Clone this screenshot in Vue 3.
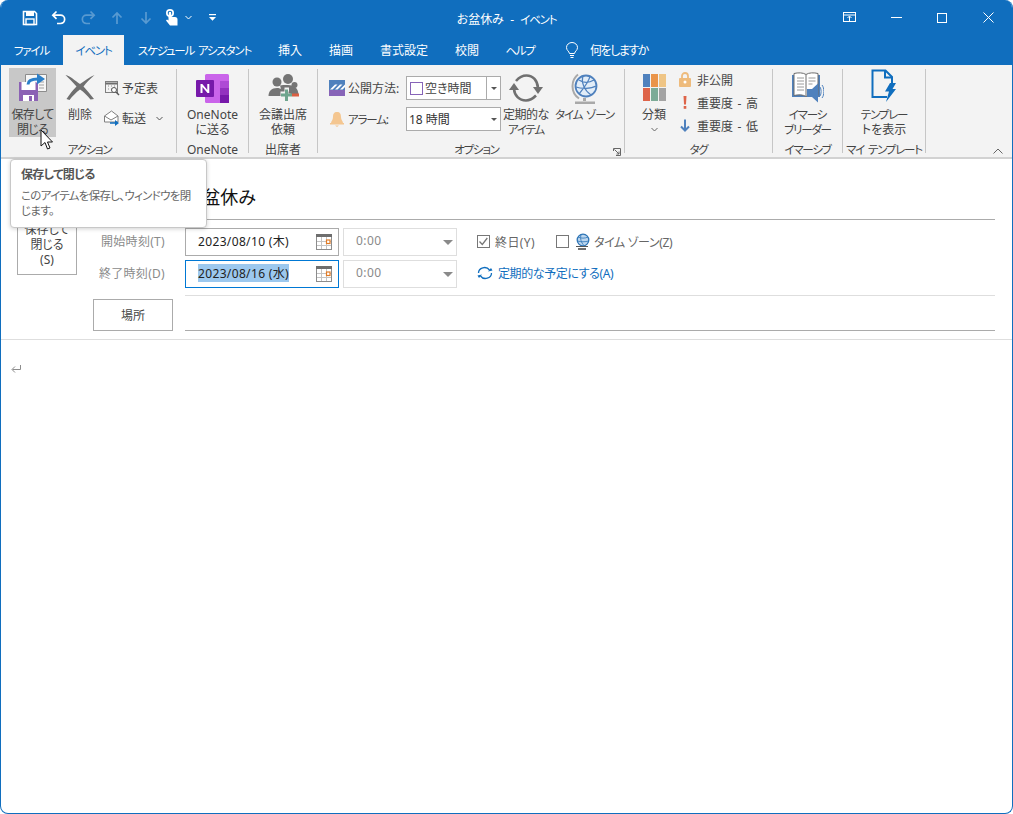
<script setup>
const tabs = [
  { label: 'ファイル', w: 63, kana: true },
  { label: 'イベント', w: 61, active: true, kana: true },
  { label: 'スケジュール アシスタント', w: 141, kana: true },
  { label: '挿入', w: 50 },
  { label: '描画', w: 52 },
  { label: '書式設定', w: 74 },
  { label: '校閲', w: 52 },
  { label: 'ヘルプ', w: 54, kana: true }
]
</script>

<template>
  <div class="window">
    <header class="titlebar">
      <div class="qat">
        <span class="qbtn">
          <svg width="16" height="16" viewBox="0 0 16 16"><path d="M1.500 1.500h11l2 2v11h-13z" fill="none" stroke="#fff" stroke-width="1.600"/><rect x="4" y="1.500" width="8" height="4.500" fill="#fff"/><rect x="4" y="9" width="8" height="5.500" fill="none" stroke="#fff" stroke-width="1.400"/></svg>
        </span>
        <span class="qbtn">
          <svg width="16" height="16" viewBox="0 0 16 16" fill="none" stroke="#fff" stroke-width="1.700"><path d="M5.500 1.500 1.800 5.200l3.700 3.700"/><path d="M2 5.200h7.500a4 4 0 0 1 0 8.300H6"/></svg>
        </span>
        <span class="qbtn dim">
          <svg width="16" height="16" viewBox="0 0 16 16" fill="none" stroke="#fff" stroke-width="1.700"><path d="m10.500 1.500 3.700 3.700-3.700 3.700"/><path d="M14 5.200H6.500a4 4 0 0 0 0 8.300H10"/></svg>
        </span>
        <span class="qbtn dim">
          <svg width="12" height="14" viewBox="0 0 12 14" fill="none" stroke="#fff" stroke-width="1.700"><path d="M6 13V2M1.500 6.500 6 2l4.500 4.500"/></svg>
        </span>
        <span class="qbtn dim">
          <svg width="12" height="14" viewBox="0 0 12 14" fill="none" stroke="#fff" stroke-width="1.700"><path d="M6 1v11M1.500 7.500 6 12l4.500-4.500"/></svg>
        </span>
        <span class="qbtn touch">
          <svg width="13" height="17" viewBox="0 0 13 17" fill="#fff"><circle cx="5" cy="4" r="4"/><path d="M3.500 4a1.500 1.500 0 0 1 3 0v4h3.500a2.500 2.500 0 0 1 2.500 2.500V16.500H5L1 11.500l1-1 1.500 1z"/><circle cx="5" cy="4" r="2.300" fill="#106ebe"/><path d="M3.800 4a1.200 1.200 0 0 1 2.400 0v5H3.800z"/></svg>
        </span>
        <span class="qbtn chev">
          <svg width="7" height="5" viewBox="0 0 7 5" fill="none" stroke="#fff"><path d="m.5 1 3 3 3-3"/></svg>
        </span>
        <span class="qbtn custom">
          <svg width="7" height="7" viewBox="0 0 7 7" fill="#fff"><rect width="7" height="1.200"/><path d="M0 3h7L3.500 6.800z"/></svg>
        </span>
      </div>
      <div class="doc-title">お盆休み&nbsp; -&nbsp; <span class="kana">イベント</span></div>
      <div class="controls">
        <span class="ctl">
          <svg width="14" height="11" viewBox="0 0 14 11" fill="none" stroke="#fff"><rect x=".5" y=".5" width="12" height="9"/><path d="M.5 3h12M6.500 9.500V4.500"/><path d="M4.500 6 6.500 4l2 2"/></svg>
        </span>
        <span class="ctl"><svg width="11" height="2" viewBox="0 0 11 2"><rect width="11" height="1" fill="#fff"/></svg></span>
        <span class="ctl"><svg width="10" height="10" viewBox="0 0 10 10"><rect x=".5" y=".5" width="9" height="9" fill="none" stroke="#fff"/></svg></span>
        <span class="ctl"><svg width="11" height="11" viewBox="0 0 11 11" fill="none" stroke="#fff"><path d="m.5.500 10 10M10.500.500l-10 10"/></svg></span>
      </div>
    </header>

    <nav class="tabs">
      <span v-for="t in tabs" :key="t.label" class="tab" :class="{ active: t.active }" :style="{ width: t.w + 'px' }"><span :class="{ kana: t.kana }">{{ t.label }}</span></span>
      <span class="tell">
        <svg width="14" height="17" viewBox="0 0 14 17" fill="none" stroke="#fff"><path d="M4.500 11.500C4 9 1.500 8.500 1.500 5.500a5.500 5 0 0 1 11 0c0 3-2.500 3.500-3 6z"/><path d="M5 13.500h4M5.500 15.500h3"/></svg>
        <span class="tell-text">何をしますか</span>
      </span>
    </nav>

    <section class="ribbon">
      <div class="group g1">
        <div class="body">
          <div class="big save">
            <span class="ico">
              <svg width="30" height="28" viewBox="0 0 30 28">
                <path d="M7.500 1.500H28.500V18.500H7.500z" fill="#f6f6f6" stroke="#8c8c8c"/>
                <path d="M21 6h5M21 9h5M21 12h5M21 15h5" stroke="#a0a0a0"/>
                <path d="M1 9h17l2 2v17H1z" fill="#8b62b4"/>
                <rect x="3.500" y="9" width="14" height="8" fill="#fff"/>
                <rect x="5" y="22" width="11" height="6" fill="#fff"/>
                <rect x="11" y="23" width="3" height="5" fill="#8b62b4"/>
                <path d="M10 11.500C10 8 13 6 20 6" fill="none" stroke="#2a7fc9" stroke-width="3"/>
                <path d="M19 0.500 27 6 19 11.500z" fill="#2a7fc9"/>
              </svg>
            </span>
            <span class="cap">保存して<br>閉じる</span>
          </div>
          <div class="big del">
            <span class="ico">
              <svg width="30" height="26" viewBox="0 0 30 26" fill="#6f6f6f"><path d="M.5 1C5 2 10 6.500 15 10 20 6.500 24.500 3 29.500 1 25 5 21.500 8.500 18.500 12.500c3.500 4 7 8 10.500 12.500L25.500 25.500C22 21.500 19 18 15 15.500 11 18.500 7.500 22 4.500 26l-3-1c3-4.500 6-8.500 10-12.500C8 8.500 4 4.500.5 1z"/></svg>
            </span>
            <span class="cap">削除</span>
          </div>
          <div class="smalls">
            <div class="small">
              <svg width="16" height="16" viewBox="0 0 16 16" fill="none"><rect x="1.500" y="1.500" width="12" height="11" stroke="#7f7f7f"/><path d="M1.500 3.500h12" stroke="#6d6d6d" stroke-width="2"/><path d="M4 6h1M7 6h1M10 6h1M4 9h1M7 9h1" stroke="#8f8f8f"/><circle cx="10" cy="10" r="2.500" fill="#fff" stroke="#555"/><path d="m12 12 3 3" stroke="#555" stroke-width="1.400"/></svg>
              <span>予定表</span>
            </div>
            <div class="small fwd">
              <svg width="16" height="16" viewBox="0 0 16 16" fill="none"><path d="M.5 6 7.500 1 14 6v6H.5z" stroke="#7f7f7f" fill="#fff"/><path d="M.5 6 7 10l7-4" stroke="#7f7f7f"/><path d="M6 13h7" stroke="#106ebe" stroke-width="1.600"/><path d="M11 10l4 3-4 3z" fill="#106ebe"/></svg>
              <span>転送</span>
              <svg class="mini" width="7" height="5" viewBox="0 0 7 5" fill="none" stroke="#555"><path d="m.5 1 3 3 3-3"/></svg>
            </div>
          </div>
        </div>
        <div class="label"><span class="kana">アクション</span></div>
      </div>

      <div class="group g2">
        <div class="body center">
          <div class="big wide">
            <span class="ico">
              <svg width="33" height="29" viewBox="0 0 33 29">
                <rect x="9" y="0" width="24" height="29" rx="1.500" fill="#ca64ea"/>
                <rect x="24" y="7" width="9" height="7" fill="#ae4bd5"/>
                <rect x="24" y="14" width="9" height="7" fill="#9332bf"/>
                <rect x="24" y="21" width="9" height="8" fill="#7719aa"/>
                <rect x="0" y="6" width="18" height="17" rx="1" fill="#7719aa"/>
                <path d="M4.500 19V10h1.800l5 6v-6h2v9h-1.800l-5-6v6z" fill="#fff"/>
              </svg>
            </span>
            <span class="cap">OneNote<br>に送る</span>
          </div>
        </div>
        <div class="label">OneNote</div>
      </div>

      <div class="group g3">
        <div class="body center">
          <div class="big wide">
            <span class="ico">
              <svg width="31" height="29" viewBox="0 0 31 29" fill="#757575">
                <circle cx="9" cy="8" r="4.500"/><circle cx="20" cy="5" r="5"/><circle cx="26.500" cy="11" r="3"/>
                <path d="M.5 22c0-5 3-8 8.500-8 2 0 3.500.5 5 1.500l1 6.500z"/>
                <path d="M12 11.500c2-1 4-.5 8-.5 6 0 10 3 10.500 9H14.500z"/>
                <path d="M12.500 22.500v-5h4v-4h4.500v4h-.5v2h2v3h-2v4h-4v-4z" fill="#f3f3f3"/>
                <path d="M15.500 22.500h-4v-3h4v-4h3v4h4v3h-4v4.500h-3z" fill="#6fa58e" transform="translate(1.500 0)"/>
                <rect x="24" y="19.500" width="7" height="3" fill="#d95f43"/>
              </svg>
            </span>
            <span class="cap">会議出席<br>依頼</span>
          </div>
        </div>
        <div class="label">出席者</div>
      </div>

      <div class="group g4">
        <div class="body">
          <div class="opt-col">
            <div class="opt-row">
              <span class="opt-ico">
                <svg width="16" height="16" viewBox="0 0 16 16"><rect width="16" height="10" fill="#4f81bd"/><path d="M1 9.500 6 4.500h2.500l-5 5zM6 9.500l5-5h2.500l-5 5zM11 9.500l5-5v2.500l-2.500 2.500z" fill="#fff"/><rect width="16" height="6" y="10" fill="#8764b8"/></svg>
              </span>
              <span class="opt-label">公開方法:</span>
              <div class="combo">
                <i class="swatch"></i><span>空き時間</span>
                <span class="drop sep"><i class="tri"></i></span>
              </div>
            </div>
            <div class="opt-row">
              <span class="opt-ico">
                <svg width="16" height="16" viewBox="0 0 16 16" fill="#f4c690"><path d="M8 1c3 0 4 2 4 5 0 3 2 4 2 6H2c0-2 2-3 2-6 0-3 1-5 4-5z"/><rect x="1" y="12" width="14" height="1.500"/><path d="M6 14.500h4L8 16z"/></svg>
              </span>
              <span class="opt-label"><span class="kana">アラーム</span>:</span>
              <div class="combo alarm-combo">
                <span class="alarm">18 時間</span>
                <span class="drop"><i class="tri"></i></span>
              </div>
            </div>
          </div>
          <div class="big recur">
            <span class="ico">
              <svg width="32" height="30" viewBox="0 0 32 30" fill="none" stroke="#707070" stroke-width="2.600"><path d="M6 8C9 4.500 12.500 2.500 16.500 2.500 23 2.500 27.500 7.500 28 15"/><path d="M26 22.500C23 25.500 20 27.500 16 27.500 9 27.500 4.500 22.500 4 16"/><path d="M23 14h10l-5 7z" fill="#707070" stroke="none"/><path d="M-1 17H9L4 10z" fill="#707070" stroke="none"/></svg>
            </span>
            <span class="cap">定期的な<br><span class="kana">アイテム</span></span>
          </div>
          <div class="big tz">
            <span class="ico">
              <svg width="28" height="32" viewBox="0 0 28 32" fill="none">
                <path d="M7 1.500C0 7-1 19 8 25.500" stroke="#a9a9a9" stroke-width="2"/>
                <circle cx="15" cy="13" r="10.500" fill="#e2edf8" stroke="#4f81bd" stroke-width="1.800"/>
                <path d="M8 7c4 3 10 3 15 0M5 14c5 2 15 2 20-1M8 21c4-5 10-12 11-18M12 3c-2 6 1 14 8 19" stroke="#4f81bd" stroke-width="1.300"/>
                <rect x="12" y="25" width="3" height="3" fill="#a9a9a9"/>
                <rect x="4" y="28.500" width="20" height="2.500" fill="#a9a9a9"/>
              </svg>
            </span>
            <span class="cap nowrap kana">タイム ゾーン</span>
          </div>
        </div>
        <div class="label"><span class="kana">オプション</span></div>
        <svg class="launcher" width="8" height="8" viewBox="0 0 8 8" fill="none" stroke="#666"><path d="M.5 3V.5H7.500V7.500H3"/><path d="M1.500 1.500 6 6M6 3.500V6H3.500"/></svg>
      </div>

      <div class="group g5">
        <div class="body">
          <div class="big cat">
            <span class="ico">
              <span class="cat-grid">
                <i style="background:#4f81bd"></i><i style="background:#ea9449"></i><i style="background:#efc585"></i>
                <i style="background:#de6449"></i><i style="background:#7cab97"></i><i style="background:#a3a3a3"></i>
              </span>
            </span>
            <span class="cap">分類</span>
            <svg class="under" width="7" height="5" viewBox="0 0 7 5" fill="none" stroke="#666"><path d="m.5 1 3 3 3-3"/></svg>
          </div>
          <div class="tags">
            <div class="tag">
              <svg width="12" height="15" viewBox="0 0 12 15"><path d="M3 7V4a3 3 0 0 1 6 0v3" fill="none" stroke="#eebb7c" stroke-width="1.800"/><rect y="6" width="12" height="9" rx="1" fill="#eebb7c"/><circle cx="6" cy="10" r="1.500" fill="#fff"/></svg>
              <span>非公開</span>
            </div>
            <div class="tag">
              <svg width="12" height="15" viewBox="0 0 12 15" fill="#de6449"><path d="M4.500 1h3l-.5 8.500H5z"/><rect x="4.700" y="11" width="2.600" height="2.800"/></svg>
              <span>重要度 - 高</span>
            </div>
            <div class="tag">
              <svg width="12" height="15" viewBox="0 0 12 15" fill="none" stroke="#4f81bd" stroke-width="2"><path d="M6 1.500v11M2 8.500l4 4 4-4"/></svg>
              <span>重要度 - 低</span>
            </div>
          </div>
        </div>
        <div class="label"><span class="kana">タグ</span></div>
      </div>

      <div class="group g6">
        <div class="body center">
          <div class="big wide">
            <span class="ico">
              <svg width="33" height="31" viewBox="0 0 33 31" fill="none">
                <path d="M1 3h28v22H1z" fill="#4f81bd"/>
                <path d="M3 1.500c4-1 9-1 12 1 3-2 8-2 12-1v22c-4-1-9-1-12 1-3-2-8-2-12-1z" fill="#fff" stroke="#6d6d6d"/>
                <path d="M15 3v21" stroke="#6d6d6d"/>
                <path d="M6 6h7M6 9h7M6 12h7M6 15h7M6 18h7M17.500 6h7M17.500 9h7M17.500 12h4" stroke="#9a9a9a"/>
                <path d="M16 17h5l6-5.500v19L21 25h-5z" fill="#4f81bd"/>
                <path d="M29 15c1.500 2 1.500 7 0 9M31 13c2.500 3 2.500 10 0 13" stroke="#4f81bd"/>
              </svg>
            </span>
            <span class="cap kana">イマーシ<br>ブリーダー</span>
          </div>
        </div>
        <div class="label"><span class="kana">イマーシブ</span></div>
      </div>

      <div class="group g7">
        <div class="body center">
          <div class="big wide">
            <span class="ico tmpl">
              <svg width="26" height="34" viewBox="0 0 26 34" fill="none">
                <path d="M16 28H1.500V1.500h13L21 8v6" stroke="#106ebe" stroke-width="2"/>
                <path d="M14 1.500V8.500h7" stroke="#106ebe" stroke-width="2"/>
                <path d="M19 14h6l-3.500 6H25L15 33l3-10.500h-4z" fill="#106ebe"/>
              </svg>
            </span>
            <span class="cap"><span class="kana">テンプレー</span><br>トを表示</span>
          </div>
        </div>
        <div class="label nowrap"><span class="kana">マイ テンプレート</span></div>
      </div>
      <svg class="collapse" width="10" height="6" viewBox="0 0 10 6" fill="none" stroke="#666"><path d="m.5 5.500 4.500-4.500 4.500 4.500"/></svg>
    </section>

    <section class="form">
      <div class="top">
        <div class="send-col">
          <button class="send">保存して<br>閉じる<br>(S)</button>
        </div>
        <div class="fields">
          <div class="subject"><span>お盆休み</span></div>
          <div class="time-row">
            <span class="flabel">開始時刻(T)</span>
            <div class="date">
              <span>2023/08/10 (木)</span>
              <svg class="cal" width="16" height="16" viewBox="0 0 16 16"><rect x=".5" y=".5" width="15" height="15" fill="#fff" stroke="#8c8c8c"/><rect width="16" height="3" fill="#6e6e6e"/><path d="M5.500 3v12M10.500 3v12M1 7.500h14M1 11.500h14" stroke="#c4c4c4"/><rect x="10.500" y="6" width="3.500" height="3.500" fill="#fff" stroke="#e07b26" stroke-width="1.200"/></svg>
            </div>
            <div class="time"><span>0:00</span><i class="tri big-tri"></i></div>
            <label class="check first">
              <i class="box"><svg width="13" height="13" viewBox="0 0 13 13" fill="none" stroke="#777" stroke-width="1.300"><path d="m2.500 6.500 2.800 3 5-6.500"/></svg></i>
              <span>終日(Y)</span>
            </label>
            <label class="check second">
              <i class="box"></i>
              <svg class="globe" width="15" height="17" viewBox="0 0 15 17" fill="none"><circle cx="8" cy="7" r="5.800" fill="#bcd6ee" stroke="#2e75b6" stroke-width="1.300"/><path d="M3 4c3 1.500 7 1.500 10 0M2.500 8c3 1 8 1 11 0M6 1.500c-1 4 0 8 3 11" stroke="#2e75b6" stroke-width=".8"/><path d="M1 13.500h12" stroke="#555"/><path d="M3 16h8" stroke="#333" stroke-width="1.400"/></svg>
              <span class="tz-text">タイム ゾーン(Z)</span>
            </label>
          </div>
          <div class="time-row">
            <span class="flabel">終了時刻(D)</span>
            <div class="date focus">
              <span class="sel">2023/08/16 (水)</span>
              <svg class="cal" width="16" height="16" viewBox="0 0 16 16"><rect x=".5" y=".5" width="15" height="15" fill="#fff" stroke="#8c8c8c"/><rect width="16" height="3" fill="#6e6e6e"/><path d="M5.500 3v12M10.500 3v12M1 7.500h14M1 11.500h14" stroke="#c4c4c4"/><rect x="10.500" y="6" width="3.500" height="3.500" fill="#fff" stroke="#e07b26" stroke-width="1.200"/></svg>
            </div>
            <div class="time"><span>0:00</span><i class="tri big-tri"></i></div>
            <span class="recur-link">
              <svg width="16" height="14" viewBox="0 0 16 14" fill="none" stroke="#106ebe" stroke-width="1.300"><path d="M1.500 7a6 5.500 0 0 1 11-3"/><path d="M14.500 7a6 5.500 0 0 1-11 3"/><path d="M15.500 4.500 11 5.500l3-3.500z" fill="#106ebe" stroke="none"/><path d="M.5 9.500 5 8.500 2 12z" fill="#106ebe" stroke="none"/></svg>
              <span>定期的な予定にする(A)</span>
            </span>
          </div>
        </div>
      </div>
      <div class="divider"></div>
      <div class="location">
        <button class="place">場所</button>
        <div class="loc-input"></div>
      </div>
    </section>
    <div class="full-line"></div>
    <div class="note">
      <svg width="10" height="9" viewBox="0 0 10 9" fill="none" stroke="#8c8c8c"><path d="M9.500 0v4.500H1.500"/><path d="M4 1.500 1 4.500l3 3"/></svg>
    </div>

    <div class="tooltip">
      <div class="tip-title">保存して閉じる</div>
      <div class="tip-text">このアイテムを保存し、ウィンドウを閉<br>じます。</div>
    </div>
    <svg class="cursor" width="14" height="22" viewBox="0 0 14 22"><path d="M1 1v16l4-3.500 2.500 6.500 2.500-1-2.500-6h5z" fill="#fff" stroke="#111"/></svg>
  </div>
</template>

<style scoped>
.window {
  position: relative;
  box-sizing: border-box;
  width: 1013px;
  height: 814px;
  border: 1px solid #106ebe;
  border-top: 0;
  border-radius: 8px;
  overflow: hidden;
  background: #fff;
  font-family: "Noto Sans", "Noto Sans CJK JP", sans-serif;
  font-size: 12px;
  font-feature-settings: "palt";
  color: #444;
}
.kana { font-size: 11.5px; letter-spacing: -1.2px; word-spacing: 2px; }
.titlebar {
  display: grid;
  grid-template-columns: 1fr auto 1fr;
  align-items: center;
  height: 35px;
  margin: 0 -1px;
  background: #106ebe;
  color: #fff;
}
.qat { display: flex; align-items: center; padding-left: 15px; }
.qbtn { display: flex; justify-content: center; align-items: center; width: 29px; height: 35px; }
.qbtn.dim { opacity: .3; }
.qbtn.touch { width: 22px; }
.qbtn.chev { width: 12px; }
.qbtn.custom { width: 24px; margin-left: 6px; }
.doc-title { padding-top: 2px; white-space: nowrap; color: #fff; }
.controls { display: flex; justify-content: flex-end; padding-right: 2px; }
.ctl { display: flex; justify-content: center; align-items: center; width: 46px; height: 35px; }

.tabs {
  display: flex;
  height: 30px;
  margin: 0 -1px;
  background: #106ebe;
  color: #fff;
}
.tab { display: flex; justify-content: center; align-items: center; white-space: nowrap; }
.tab.active { background: #f3f3f3; color: #106ebe; }
.tell { display: flex; align-items: center; gap: 11px; margin-left: 18px; }
.tell-text { letter-spacing: -1.5px; }

.ribbon {
  position: relative;
  display: flex;
  box-sizing: border-box;
  height: 94px;
  padding-top: 4px;
  background: #f3f3f3;
  border-bottom: 2px solid #d2d2d2;
}
.group {
  position: relative;
  box-sizing: border-box;
  display: flex;
  flex-direction: column;
  height: 84px;
  border-right: 1px solid #c6c6c6;
}
.g1 { width: 176px; padding-left: 8px; }
.g2 { width: 72px; }
.g3 { width: 69px; }
.g4 { width: 307px; padding-left: 11px; }
.g5 { width: 148px; }
.g6 { width: 70px; }
.g7 { width: 83px; }
.body { display: flex; flex: none; height: 73px; }
.body.center { justify-content: center; }
.label {
  flex: none;
  height: 16px;
  line-height: 16px;
  text-align: center;
  white-space: nowrap;
}
.g1 .label { padding-right: 6px; }
.nowrap { white-space: nowrap; }
.big {
  display: flex;
  flex-direction: column;
  align-items: center;
  flex: none;
  text-align: center;
}
.ico {
  display: flex;
  justify-content: center;
  align-items: flex-end;
  height: 34px;
  margin-bottom: 4px;
}
.cap { line-height: 15px; white-space: nowrap; }

.save {
  width: 47px;
  height: 69px;
  margin-top: -1px;
  background: #c8c8c8;
}
.save .ico { height: 33px; margin-bottom: 6px; }
.save .cap { letter-spacing: -.7px; }
.del { width: 40px; margin-left: 4px; }
.del .ico { height: 31px; margin-bottom: 7px; }
.smalls { display: flex; flex-direction: column; margin-left: 4px; }
.small { display: flex; align-items: center; gap: 3px; height: 30px; margin-top: 4px; }
.small span { margin-left: -1px; }
.small.fwd { margin-top: 0; }
.mini { margin-left: 7px; }

.wide { width: 64px; }

.opt-col { display: flex; flex-direction: column; gap: 7px; margin-top: 7px; }
.opt-row { display: flex; align-items: center; height: 24px; }
.opt-ico { display: flex; width: 19px; }
.opt-label { width: 58px; white-space: nowrap; }
.combo {
  display: flex;
  align-items: center;
  box-sizing: border-box;
  width: 95px;
  height: 24px;
  padding-left: 3px;
  background: #fff;
  border: 1px solid #ababab;
}
.alarm-combo { padding-left: 2px; }
.swatch { box-sizing: border-box; width: 13px; height: 13px; margin-right: 2px; border: 1px solid #8764b8; background: #fff; }
.alarm { color: #333; }
.drop { display: flex; justify-content: center; align-items: center; width: 13px; height: 100%; margin-left: auto; }
.drop.sep { border-left: 1px solid #ababab; }
.tri { width: 0; height: 0; border: 3px solid transparent; border-top: 3px solid #555; border-bottom: 0; }

.recur { width: 46px; margin-left: 2px; }
.recur svg { overflow: visible; }
.recur .cap { letter-spacing: -.5px; }
.recur .cap .kana { letter-spacing: -1.2px; }
.tz { width: 61px; margin-left: 5px; }
.tz .ico { height: 36px; margin-bottom: 2px; }

.launcher { position: absolute; right: 3px; bottom: -3px; }

.cat { width: 32px; margin-left: 13px; }
.cat-grid { display: grid; grid-template-columns: repeat(3, 7px); grid-auto-rows: 13px; gap: 1px; }
.cat-grid i { display: block; }
.cat .ico { height: 32px; margin-bottom: 6px; }
.under { margin-top: 5px; }
.tags { display: flex; flex-direction: column; margin-left: 9px; margin-top: -1px; }
.tag { display: flex; align-items: center; gap: 6px; height: 23px; white-space: nowrap; word-spacing: 1.5px; }

.tmpl { height: 34px; margin-bottom: 4px; }
.collapse { position: absolute; right: 9px; bottom: 3px; }

.top { display: flex; height: 136px; }
.send-col { width: 92px; flex: none; padding: 46px 0 0 16px; box-sizing: border-box; }
.send {
  display: block;
  box-sizing: border-box;
  width: 60px;
  height: 70px;
  padding: 8px 0 0;
  background: #fff;
  border: 1px solid #ababab;
  font: inherit;
  line-height: 15px;
  color: #444;
}
.fields { flex: 1; padding-right: 17px; }
.subject {
  display: flex;
  align-items: flex-end;
  box-sizing: border-box;
  height: 61px;
  margin-left: 92px;
  padding-bottom: 10px;
  border-bottom: 1px solid #ababab;
  font-size: 18px;
  color: #111;
}
.time-row { display: flex; align-items: center; height: 28px; margin-top: 4px; }
.subject + .time-row { margin-top: 8px; }
.flabel { width: 72px; margin-right: 20px; padding-bottom: 2px; text-align: right; color: #8a8a8a; white-space: nowrap; letter-spacing: .3px; }
.date {
  display: flex;
  align-items: center;
  justify-content: space-between;
  box-sizing: border-box;
  width: 154px;
  height: 28px;
  padding: 0 6px 3px 12px;
  border: 1px solid #ababab;
  letter-spacing: .35px;
  color: #222;
}
.date.focus { border-color: #0078d4; }
.date .cal { margin-top: 3px; }
.sel { background: #9cc8ee; }
.time {
  display: flex;
  align-items: center;
  justify-content: space-between;
  box-sizing: border-box;
  width: 114px;
  height: 28px;
  margin-left: 4px;
  padding: 0 3px 3px 12px;
  border: 1px solid #dedede;
  letter-spacing: .4px;
  color: #8a8a8a;
}
.big-tri { border-width: 5px; border-top: 5px solid #8a8a8a; border-bottom: 0; margin-top: 4px; }
.check { display: flex; align-items: center; padding-bottom: 1px; color: #666; white-space: nowrap; }
.first { margin-left: 20px; gap: 5px; letter-spacing: .4px; }
.second { margin-left: 21px; gap: 6px; }
.tz-text { letter-spacing: -.4px; }
.box { display: block; box-sizing: border-box; width: 13px; height: 13px; border: 1px solid #777; }
.box svg { display: block; margin: -1px; }
.second .globe { margin-right: -2px; }
.recur-link { display: flex; align-items: center; gap: 5px; margin-left: 20px; padding-bottom: 2px; color: #106ebe; letter-spacing: -.4px; }
.divider { height: 1px; margin: 0 17px 0 184px; background: #dedede; }
.location { display: flex; height: 35px; padding-left: 92px; padding-right: 17px; box-sizing: border-box; }
.place {
  box-sizing: border-box;
  width: 80px;
  height: 32px;
  margin-top: 3px;
  background: #fff;
  border: 1px solid #ababab;
  font: inherit;
  color: #444;
}
.loc-input { flex: 1; height: 35px; margin-left: 12px; box-sizing: border-box; border-bottom: 1px solid #ababab; }
.full-line { height: 1px; margin-top: 8px; background: #dedede; }
.note { padding: 25px 0 0 10px; }
.note svg { display: block; }

.tooltip {
  position: absolute;
  left: 9px;
  top: 159px;
  box-sizing: border-box;
  width: 197px;
  height: 69px;
  padding: 7px 11px 7px 10px;
  background: #fff;
  border: 1px solid #c8c8c8;
  border-radius: 4px;
  box-shadow: 0 1px 4px rgba(0, 0, 0, .18);
}
.tip-title { font-weight: 700; line-height: 16px; color: #555; letter-spacing: -.7px; }
.tip-text { margin-top: 5px; line-height: 15px; font-size: 11.5px; letter-spacing: -.7px; color: #666; white-space: nowrap; }
.cursor { position: absolute; left: 39px; top: 129px; }
</style>

<style>
html, body { margin: 0; background: #fff; }
</style>
